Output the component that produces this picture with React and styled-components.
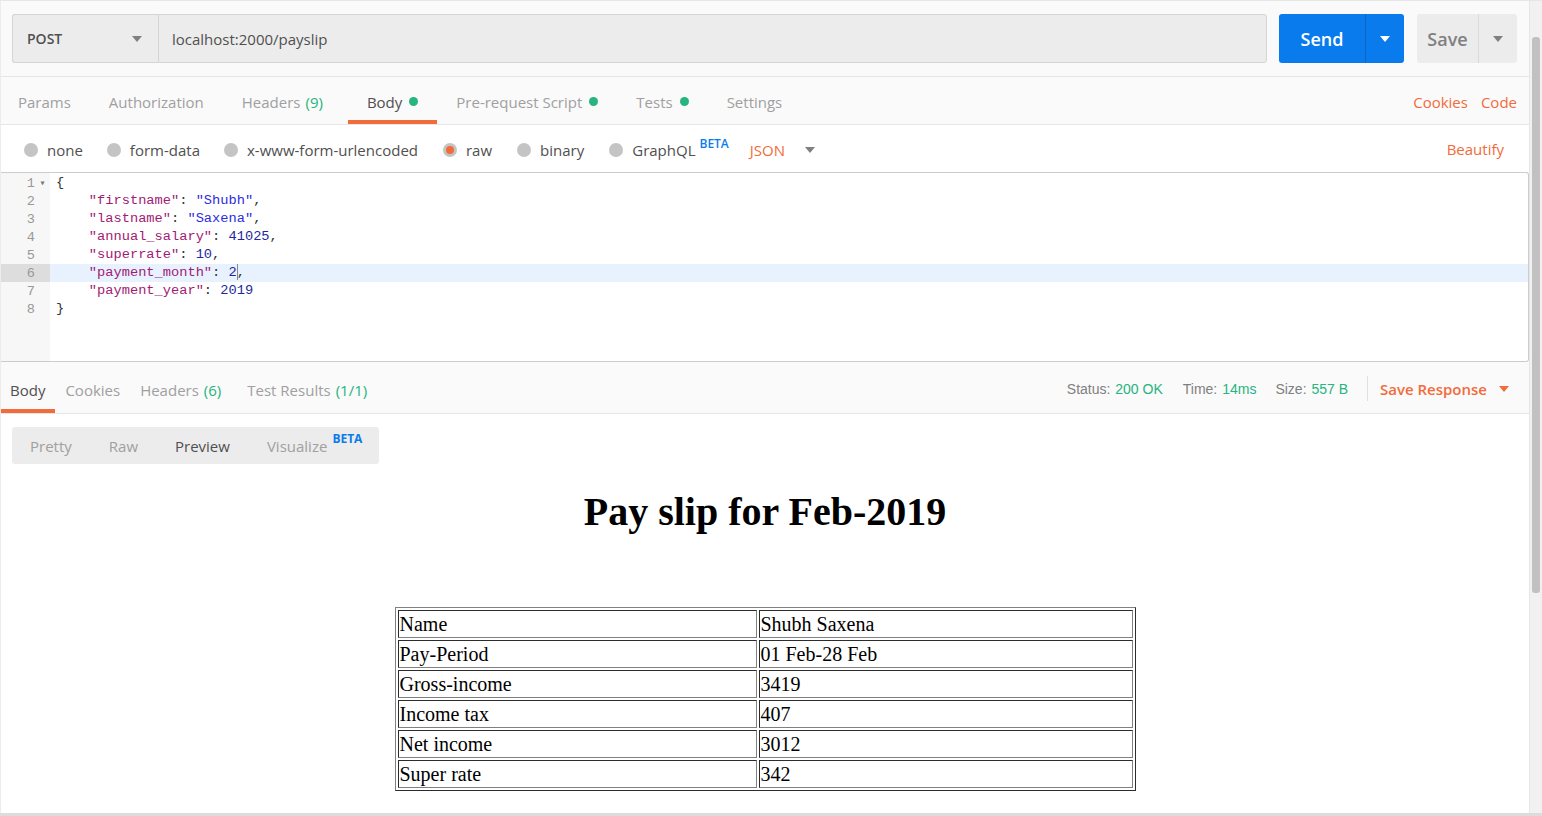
import React from "react";
import styled, { createGlobalStyle } from "styled-components";

const GlobalStyle = createGlobalStyle`
  html, body {
    margin: 0;
    padding: 0;
    background: #ffffff;
    overflow: hidden;
  }
  * { box-sizing: border-box; }
`;

const requestTabs = [
  { label: "Params" },
  { label: "Authorization" },
  { label: "Headers", count: "(9)" },
  { label: "Body", dot: true, active: true },
  { label: "Pre-request Script", dot: true },
  { label: "Tests", dot: true },
  { label: "Settings" },
];

const bodyTypes = ["none", "form-data", "x-www-form-urlencoded", "raw", "binary", "GraphQL"];

const codeLines = [
  [["p", "{"]],
  [["p", "    "], ["k", "\"firstname\""], ["p", ": "], ["s", "\"Shubh\""], ["p", ","]],
  [["p", "    "], ["k", "\"lastname\""], ["p", ": "], ["s", "\"Saxena\""], ["p", ","]],
  [["p", "    "], ["k", "\"annual_salary\""], ["p", ": "], ["n", "41025"], ["p", ","]],
  [["p", "    "], ["k", "\"superrate\""], ["p", ": "], ["n", "10"], ["p", ","]],
  [["p", "    "], ["k", "\"payment_month\""], ["p", ": "], ["n", "2"], ["c", ""], ["p", ","]],
  [["p", "    "], ["k", "\"payment_year\""], ["p", ": "], ["n", "2019"]],
  [["p", "}"]],
];

const slipRows = [
  ["Name", "Shubh Saxena"],
  ["Pay-Period", "01 Feb-28 Feb"],
  ["Gross-income", "3419"],
  ["Income tax", "407"],
  ["Net income", "3012"],
  ["Super rate", "342"],
];

function App() {
  return (
    <Shell>
      <GlobalStyle />
      <Main>
        <RequestBar>
          <MethodBox>
            <span>POST</span>
            <Caret />
          </MethodBox>
          <UrlInput>localhost:2000/payslip</UrlInput>
          <SplitButton $primary>
            <ButtonLabel>Send</ButtonLabel>
            <ButtonArrow $primary>
              <Caret $color="#ffffff" />
            </ButtonArrow>
          </SplitButton>
          <SplitButton>
            <ButtonLabel>Save</ButtonLabel>
            <ButtonArrow>
              <Caret />
            </ButtonArrow>
          </SplitButton>
        </RequestBar>

        <TabRow>
          <Tabs>
            {requestTabs.map((t) => (
              <Tab key={t.label} $active={t.active} $extra={!!t.count}>
                {t.label}
                {t.count && <Count>{t.count}</Count>}
                {t.dot && <Dot />}
              </Tab>
            ))}
          </Tabs>
          <Links>
            <OrangeLink>Cookies</OrangeLink>
            <OrangeLink>Code</OrangeLink>
          </Links>
        </TabRow>

        <BodyTypeRow>
          <RadioGroup>
            {bodyTypes.map((b) => (
              <RadioItem key={b}>
                <Radio $checked={b === "raw"} />
                <span>{b}</span>
                {b === "GraphQL" && <Beta>BETA</Beta>}
              </RadioItem>
            ))}
            <LangSelect>
              JSON
              <Caret />
            </LangSelect>
          </RadioGroup>
          <OrangeLink>Beautify</OrangeLink>
        </BodyTypeRow>

        <Editor>
          <Gutter>
            {codeLines.map((_, i) => (
              <LineNo key={i} $active={i === 5}>
                {i + 1}
                <Fold>{i === 0 ? "▾" : ""}</Fold>
              </LineNo>
            ))}
          </Gutter>
          <Code>
            {codeLines.map((line, i) => (
              <CodeLine key={i} $active={i === 5}>
                {line.map(([kind, text], j) =>
                  kind === "c" ? <Cursor key={j} /> : (
                    <Token key={j} $kind={kind}>{text}</Token>
                  )
                )}
              </CodeLine>
            ))}
          </Code>
        </Editor>

        <ResponseBar>
          <Tabs>
            <RespTab $active>Body</RespTab>
            <RespTab>Cookies</RespTab>
            <RespTab>Headers <Count>(6)</Count></RespTab>
            <RespTab $wide>Test Results <Count>(1/1)</Count></RespTab>
          </Tabs>
          <Meta>
            <MetaItem>Status: <MetaValue>200 OK</MetaValue></MetaItem>
            <MetaItem>Time: <MetaValue>14ms</MetaValue></MetaItem>
            <MetaItem>Size: <MetaValue>557 B</MetaValue></MetaItem>
            <Divider />
            <SaveResponse>
              Save Response
              <Caret $color="#f26b3a" />
            </SaveResponse>
          </Meta>
        </ResponseBar>

        <ViewBar>
          <Segment>
            <SegItem>Pretty</SegItem>
            <SegItem>Raw</SegItem>
            <SegItem $active>Preview</SegItem>
            <SegItem $last>
              Visualize<SegBeta>BETA</SegBeta>
            </SegItem>
          </Segment>
        </ViewBar>

        <Preview>
          <SlipTitle>Pay slip for Feb-2019</SlipTitle>
          <SlipTable>
            <tbody>
              {slipRows.map(([k, v]) => (
                <tr key={k}>
                  <SlipCell $first>{k}</SlipCell>
                  <SlipCell>{v}</SlipCell>
                </tr>
              ))}
            </tbody>
          </SlipTable>
        </Preview>
      </Main>
      <ScrollTrack>
        <ScrollThumb />
      </ScrollTrack>
    </Shell>
  );
}

export default App;

const Shell = styled.div`
  display: flex;
  width: 1542px;
  height: 816px;
  border-top: 1px solid #e6e6e6;
  border-bottom: 3px solid #dcdcdc;
  background: #fafafa;
  font-family: "Open Sans", "Liberation Sans", sans-serif;
  color: #505050;
  overflow: hidden;
`;

const Main = styled.div`
  flex: 1;
  display: flex;
  flex-direction: column;
  min-width: 0;
  border-left: 1px solid #ececec;
  border-right: 1px solid #e6e6e6;
`;

const RequestBar = styled.div`
  display: flex;
  align-items: stretch;
  height: 76px;
  padding: 13px 12px 13px 11px;
  border-bottom: 1px solid #e6e6e6;
`;

const Caret = styled.i`
  display: inline-block;
  width: 0;
  height: 0;
  border-left: 5px solid transparent;
  border-right: 5px solid transparent;
  border-top: 6px solid ${(p) => p.$color || "#808080"};
`;

const MethodBox = styled.div`
  width: 146px;
  display: flex;
  align-items: center;
  justify-content: space-between;
  padding: 0 16px 0 14px;
  background: #ececec;
  border: 1px solid #d4d4d4;
  border-right: none;
  border-radius: 3px 0 0 3px;
  font-size: 14px;
  font-weight: 600;
  color: #505050;
`;

const UrlInput = styled.div`
  flex: 1;
  display: flex;
  align-items: center;
  padding: 0 13px;
  background: #ececec;
  border: 1px solid #d4d4d4;
  border-radius: 0 3px 3px 0;
  font-size: 15px;
  color: #505050;
`;

const SplitButton = styled.div`
  display: flex;
  margin-left: ${(p) => (p.$primary ? "12px" : "13px")};
  width: ${(p) => (p.$primary ? "125px" : "100px")};
  background: ${(p) => (p.$primary ? "#097bed" : "#ececec")};
  color: ${(p) => (p.$primary ? "#ffffff" : "#808080")};
  border-radius: 3px;
`;

const ButtonLabel = styled.div`
  flex: 1;
  display: flex;
  align-items: center;
  justify-content: center;
  font-size: 18px;
  font-weight: 600;
`;

const ButtonArrow = styled.div`
  width: 39px;
  display: flex;
  align-items: center;
  justify-content: center;
  border-left: 1px solid ${(p) => (p.$primary ? "#0a66c2" : "#dadada")};
`;

const TabRow = styled.div`
  display: flex;
  align-items: stretch;
  justify-content: space-between;
  height: 48px;
  border-bottom: 1px solid #e6e6e6;
`;

const Tabs = styled.div`
  display: flex;
  align-items: stretch;
`;

const Tab = styled.div`
  display: flex;
  align-items: center;
  padding: 6px 19px 0;
  margin-right: ${(p) => (p.$extra ? "6px" : "0")};
  font-size: 15px;
  color: ${(p) => (p.$active ? "#505050" : "#a0a0a0")};
  border-bottom: 4px solid ${(p) => (p.$active ? "#f26b3a" : "transparent")};
  &:first-child { padding-left: 17px; }
`;

const Count = styled.span`
  color: #26b47f;
  margin-left: 5px;
`;

const Dot = styled.span`
  width: 9px;
  height: 9px;
  border-radius: 50%;
  background: #26b47f;
  margin-left: 7px;
`;

const Links = styled.div`
  display: flex;
  align-items: center;
  gap: 13px;
  padding-right: 12px;
  padding-top: 2px;
`;

const OrangeLink = styled.span`
  color: #f26b3a;
  font-size: 15px;
`;

const BodyTypeRow = styled.div`
  display: flex;
  align-items: center;
  justify-content: space-between;
  height: 47px;
  padding: 0 25px 0 23px;
  background: #ffffff;
`;

const RadioGroup = styled.div`
  display: flex;
  align-items: center;
  gap: 24px;
`;

const RadioItem = styled.label`
  display: flex;
  align-items: center;
  gap: 9px;
  font-size: 15px;
  color: #505050;
  padding-top: 3px;
  &:nth-child(n + 4) { margin-left: 1px; }
`;

const Radio = styled.span`
  width: 14px;
  height: 14px;
  border-radius: 50%;
  background: #c4c4c4;
  display: flex;
  align-items: center;
  justify-content: center;
  &::after {
    content: "";
    display: ${(p) => (p.$checked ? "block" : "none")};
    width: 8px;
    height: 8px;
    border-radius: 50%;
    background: #f26b3a;
  }
`;

const Beta = styled.sup`
  font-size: 12px;
  font-weight: 600;
  color: #097bed;
  margin-left: -5px;
  align-self: flex-start;
  margin-top: -5px;
`;

const LangSelect = styled.span`
  display: flex;
  align-items: center;
  gap: 20px;
  color: #f26b3a;
  font-size: 15px;
  margin-left: -3px;
  padding-top: 2px;
`;

const Editor = styled.div`
  display: flex;
  height: 190px;
  background: #ffffff;
  border: 1px solid #cccccc;
  border-left: none;
  border-radius: 0 3px 3px 0;
`;

const Gutter = styled.div`
  width: 49px;
  background: #f7f7f7;
  padding-top: 1px;
`;

const LineNo = styled.div`
  display: flex;
  justify-content: flex-end;
  align-items: center;
  height: 18px;
  font-family: "Liberation Mono", "DejaVu Sans Mono", monospace;
  font-size: 13.6px;
  color: #999999;
  background: ${(p) => (p.$active ? "#dddddd" : "transparent")};
`;

const Fold = styled.span`
  width: 15px;
  font-size: 10px;
  text-align: center;
  color: #777777;
`;

const Code = styled.div`
  flex: 1;
  padding-top: 1px;
`;

const CodeLine = styled.div`
  height: 18px;
  line-height: 18px;
  padding-left: 6px;
  white-space: pre;
  font-family: "Liberation Mono", "DejaVu Sans Mono", monospace;
  font-size: 13.7px;
  color: #333333;
  background: ${(p) => (p.$active ? "#e8f2ff" : "transparent")};
`;

const tokenColors = { k: "#a11a74", s: "#2d2dde", n: "#1d2a9e", p: "#333333" };

const Token = styled.span`
  color: ${(p) => tokenColors[p.$kind]};
`;

const Cursor = styled.span`
  display: inline-block;
  width: 1px;
  height: 16px;
  background: #888888;
  vertical-align: middle;
  margin-right: -1px;
`;

const ResponseBar = styled.div`
  display: flex;
  align-items: stretch;
  justify-content: space-between;
  height: 52px;
  border-bottom: 1px solid #e6e6e6;
`;

const RespTab = styled.div`
  display: flex;
  align-items: center;
  padding: 8px 10px 0;
  margin-left: ${(p) => (p.$wide ? "6px" : "0")};
  font-size: 15px;
  color: ${(p) => (p.$active ? "#505050" : "#a0a0a0")};
  border-bottom: 4px solid ${(p) => (p.$active ? "#f26b3a" : "transparent")};
  &:first-child { padding-left: 9px; }
`;

const Meta = styled.div`
  display: flex;
  align-items: center;
  padding-right: 20px;
  padding-top: 2px;
`;

const MetaItem = styled.span`
  font-family: "Liberation Sans", Arial, sans-serif;
  font-size: 14px;
  color: #808080;
  margin-right: 19px;
  &:first-child { margin-right: 20px; }
`;

const MetaValue = styled.span`
  color: #26b47f;
  margin-left: 1px;
`;

const Divider = styled.span`
  width: 1px;
  height: 25px;
  background: #e0e0e0;
  margin: 0 12px 0 0;
`;

const SaveResponse = styled.span`
  display: flex;
  align-items: center;
  gap: 12px;
  font-size: 15px;
  font-weight: 600;
  color: #f26b3a;
`;

const ViewBar = styled.div`
  background: #ffffff;
  padding: 13px 11px 0;
`;

const Segment = styled.div`
  display: inline-flex;
  align-items: center;
  height: 37px;
  background: #ececec;
  border-radius: 3px;
`;

const SegItem = styled.span`
  display: flex;
  align-items: flex-start;
  padding: 1px ${(p) => (p.$last ? "17px" : "19px")} 0 18px;
  font-size: 15px;
  color: ${(p) => (p.$active ? "#505050" : "#a0a0a0")};
`;

const SegBeta = styled.span`
  font-size: 12px;
  font-weight: 700;
  color: #097bed;
  margin-left: 5px;
  margin-top: -6px;
`;

const Preview = styled.div`
  flex: 1;
  background: #ffffff;
  display: flex;
  flex-direction: column;
  align-items: center;
`;

const SlipTitle = styled.h1`
  font-family: "Liberation Serif", "Times New Roman", serif;
  font-size: 40px;
  font-weight: 700;
  color: #000000;
  margin: 25px 0 72px;
  line-height: 46px;
`;

const SlipTable = styled.table`
  width: 741px;
  border: 1px outset #808080;
  border-spacing: 2px;
  font-family: "Liberation Serif", "Times New Roman", serif;
  font-size: 20px;
  color: #000000;
`;

const SlipCell = styled.td`
  width: ${(p) => (p.$first ? "359px" : "auto")};
  border: 1px inset #808080;
  padding: 1px;
  height: 28px;
  line-height: 24px;
`;

const ScrollTrack = styled.div`
  width: 12px;
  background: #f1f1f1;
  padding: 36px 2px 0;
`;

const ScrollThumb = styled.div`
  height: 556px;
  background: #c1c1c1;
  border-radius: 3px;
`;
